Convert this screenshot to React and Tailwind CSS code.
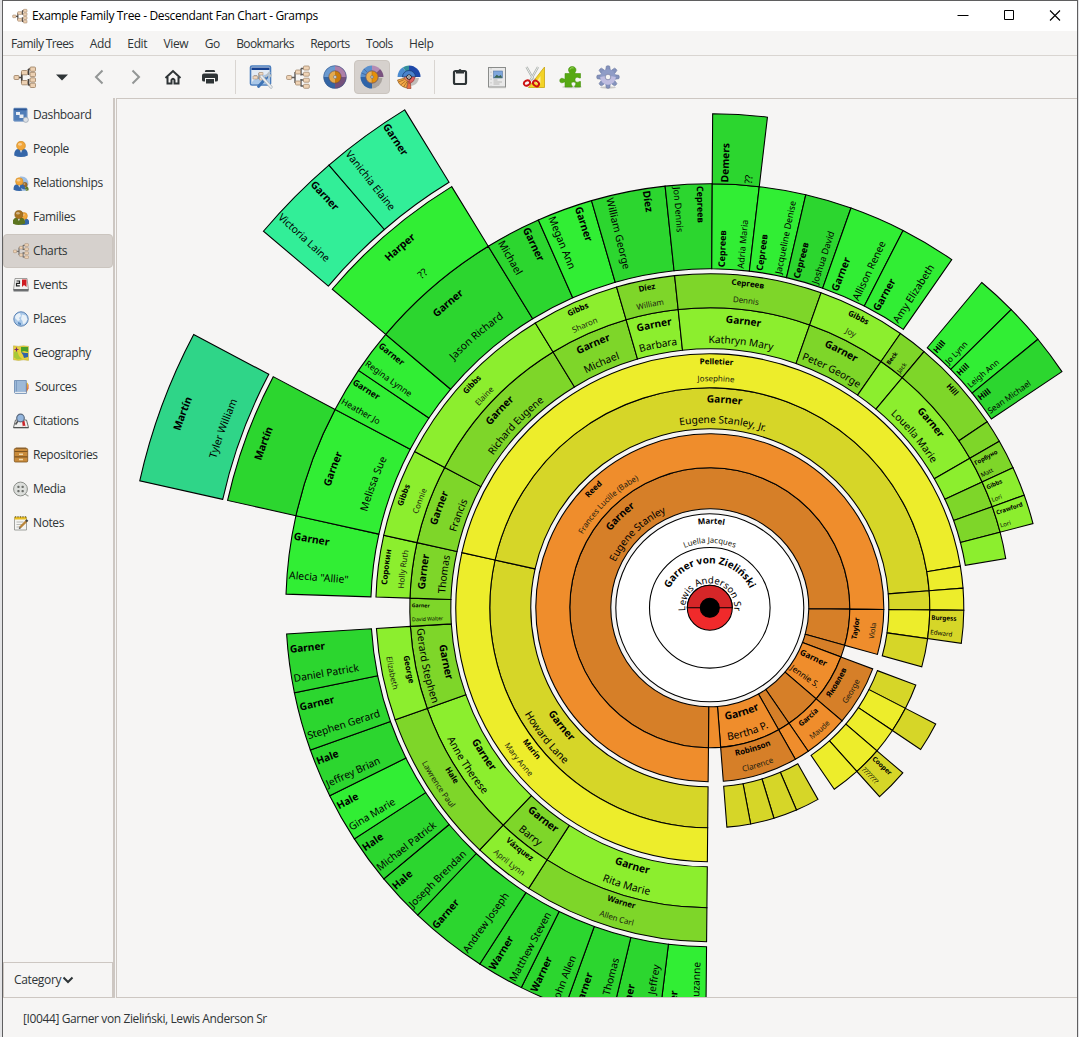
import React from "react";

const CX = 709.8;
const CY = 607.8;
const ORANGE = ["#d67f28", "#ef8d2c"];
const YELLOW = ["#d6d628", "#eded2b"];
const LIME = ["#7ed629", "#8cee2e"];
const GREEN = ["#2cd62f", "#31ee34"];
const TEAL = ["#2fd588", "#32ee98"];

// [inner radius, outer radius, start angle, end angle, fill, surname, given, mode, font size, given start radius]
// Angles are degrees clockwise from twelve o'clock. Mode "a" follows the arc, "r" follows the radius.
const SECTORS = [
  [99, 140, -179.45, 90.55, ORANGE[0], "Garner", "Eugene Stanley", "a", 10.1],
  [140, 174, -179.45, 90.55, ORANGE[1], "Reed", "Frances Lucille (Babe)", "a", 7.9],
  [99, 140, 90.55, 105.55, ORANGE[0]],
  [140, 174, 90.55, 105.55, ORANGE[1], "Taylor", "Viola", "a", 7.3],
  [99, 140, 105.55, 110.55, ORANGE[0]],
  [99, 140, 110.55, 130.55, ORANGE[1], "Garner", "Jennie S.", "r", 8.3],
  [140, 174, 110.55, 130.55, ORANGE[0], "Яковлев", "George", "a", 7.8],
  [99, 140, 130.55, 145.55, ORANGE[0]],
  [140, 174, 130.55, 145.55, ORANGE[1], "García", "Maude", "a", 7.5],
  [99, 140, 145.55, 150.55, ORANGE[0]],
  [140, 174, 145.55, 150.55, ORANGE[1]],
  [99, 140, 150.55, 175.55, ORANGE[1], "Garner", "Bertha P.", "a", 10.4],
  [140, 174, 150.55, 175.55, ORANGE[0], "Robinson", "Clarence", "a", 8],
  [99, 140, 175.55, 180.55, ORANGE[1]],

  [179, 220, -179.45, -77.45, YELLOW[0], "Garner", "Howard Lane", "a", 10.4],
  [220, 254, -179.45, -77.45, YELLOW[1], "Marín", "Mary Anne", "a", 8],
  [179, 220, -77.45, 85.55, YELLOW[0], "Garner", "Eugene Stanley, Jr.", "a", 10.2],
  [220, 254, -77.45, 80.55, YELLOW[1], "Pelletier", "Josephine", "a", 8],
  [220, 254, 80.55, 85.55, YELLOW[1]],
  [179, 220, 85.55, 90.55, YELLOW[0]],
  [220, 254, 85.55, 90.55, YELLOW[1]],
  [179, 220, 90.55, 98.05, YELLOW[1]],
  [220, 254, 90.55, 98.05, YELLOW[0], "Burgess", "Edward", "r", 6.3],
  [179, 220, 98.05, 105.55, YELLOW[0]],
  [179, 220, 110.55, 117.2, YELLOW[0]],
  [179, 220, 117.2, 123.9, YELLOW[1]],
  [220, 254, 117.2, 123.9, YELLOW[0]],
  [179, 220, 123.9, 130.55, YELLOW[1]],
  [179, 220, 130.55, 138.05, YELLOW[1]],
  [220, 254, 130.55, 138.05, YELLOW[0], "Cooper", "???????", "r", 6.7],
  [179, 220, 138.05, 145.55, YELLOW[1]],
  [179, 220, 150.55, 156.8, YELLOW[0]],
  [179, 220, 156.8, 163.05, YELLOW[0]],
  [179, 220, 163.05, 169.3, YELLOW[0]],
  [179, 220, 169.3, 175.55, YELLOW[0]],

  [259, 300, -179.45, -147.15, LIME[1], "Garner", "Rita Marie", "a", 10.4],
  [300, 334, -179.45, -147.15, LIME[0], "Warner", "Allen Carl", "a", 8],
  [259, 300, -147.15, -136.45, LIME[0], "Garner", "Barry", "a", 10.4],
  [300, 334, -147.15, -136.45, LIME[1], "Vázquez", "April Lynn", "a", 8],
  [259, 300, -136.45, -109.6, LIME[1], "Garner", "Anne Therese", "a", 10.4],
  [300, 334, -136.45, -109.6, LIME[0], "Hale", "Lawrence Paul", "a", 8],
  [259, 300, -109.6, -93.55, LIME[0], "Garner", "Gerard Stephen", "a", 10.4],
  [300, 334, -109.6, -93.55, LIME[1], "George", "Elizabeth", "a", 8],
  [259, 300, -93.55, -88.15, LIME[0], "Garner", "David Walter", "r", 5.2],
  [259, 300, -88.15, -77.45, LIME[0], "Garner", "Thomas", "a", 10.2],
  [300, 334, -88.15, -77.45, LIME[1], "Сорокин", "Holly Ruth", "a", 8],
  [259, 300, -77.45, -62.1, LIME[0], "Garner", "Francis", "a", 10.2],
  [300, 334, -77.45, -62.1, LIME[1], "Gibbs", "Connie", "a", 8],
  [259, 300, -62.1, -31.5, LIME[0], "Garner", "Richard Eugene", "a", 10.2],
  [300, 334, -62.1, -31.5, LIME[1], "Gibbs", "Elaine", "a", 8],
  [259, 300, -31.5, -16.2, LIME[0], "Garner", "Michael", "a", 10.2],
  [300, 334, -31.5, -16.2, LIME[1], "Gibbs", "Sharon", "a", 8],
  [259, 300, -16.2, -6.05, LIME[1], "Garner", "Barbara", "a", 10.2],
  [300, 334, -16.2, -6.05, LIME[0], "Díez", "William", "a", 8],
  [259, 300, -6.05, 19.45, LIME[1], "Garner", "Kathryn Mary", "a", 10.2],
  [300, 334, -6.05, 19.45, LIME[0], "Сергеев", "Dennis", "a", 8],
  [259, 300, 19.45, 34.8, LIME[0], "Garner", "Peter George", "a", 10.2],
  [300, 334, 19.45, 34.8, LIME[1], "Gibbs", "Joy", "a", 8],
  [259, 300, 34.8, 39.9, LIME[1]],
  [300, 334, 34.8, 39.9, LIME[0], "Beck", "Jack", "r", 6],
  [259, 300, 39.9, 60.1, LIME[1], "Garner", "Louella Marie", "a", 10.2],
  [300, 334, 39.9, 56.15, LIME[0], "Hill", "", "a", 8],
  [300, 334, 56.15, 60.1, LIME[0]],
  [259, 300, 60.1, 65.2, LIME[1]],
  [300, 334, 60.1, 65.2, LIME[0], "Горбуно", "Matt", "r", 6],
  [259, 300, 65.2, 70.3, LIME[0]],
  [300, 334, 65.2, 70.3, LIME[1], "Gibbs", "Lori", "r", 6],
  [259, 300, 70.3, 75.4, LIME[0]],
  [300, 334, 70.3, 75.4, LIME[1], "Crawford", "Lori", "r", 6],
  [259, 300, 75.4, 80.55, LIME[1]],

  [339, 424, -179.45, -172.99, GREEN[1], "Warner", "Suzanne", "r", 10.2, 395],
  [339, 424, -172.99, -166.53, GREEN[0], "Warner", "Jeffrey", "r", 10.2, 391],
  [339, 424, -166.53, -160.07, GREEN[0], "Warner", "Thomas", "r", 10.2, 401],
  [339, 424, -160.07, -153.61, GREEN[0], "Warner", "John Allen", "r", 10.2],
  [339, 424, -153.61, -147.15, GREEN[0], "Warner", "Matthew Steven", "r", 10.2],
  [339, 424, -147.15, -136.45, GREEN[0], "Garner", "Andrew Joseph", "r", 10.2],
  [339, 424, -136.45, -129.74, GREEN[0], "Hale", "Joseph Brendan", "r", 10.2],
  [339, 424, -129.74, -123.03, GREEN[0], "Hale", "Michael Patrick", "r", 10.2],
  [339, 424, -123.03, -116.31, GREEN[1], "Hale", "Gina Marie", "r", 10.2],
  [339, 424, -116.31, -109.6, GREEN[0], "Hale", "Jeffrey Brian", "r", 10.2],
  [339, 424, -109.6, -101.57, GREEN[0], "Garner", "Stephen Gerard", "r", 10.2],
  [339, 424, -101.57, -93.55, GREEN[0], "Garner", "Daniel Patrick", "r", 10.2],
  [339, 424, -88.15, -77.45, GREEN[1], "Garner", 'Alecia "Allie"', "r", 10.4],
  [339, 424, -77.45, -62.1, GREEN[1], "Garner", "Melissa Sue", "a", 10.4],
  [424, 494, -77.45, -62.1, GREEN[0], "Martín", "", "a", 10.4],
  [339, 424, -62.1, -55.95, GREEN[1], "Garner", "Heather Jo", "r", 8.7],
  [339, 424, -55.95, -49.85, GREEN[1], "Garner", "Regina Lynne", "r", 8.7],
  [339, 424, -49.85, -31.5, GREEN[0], "Garner", "Jason Richard", "a", 10.4],
  [424, 494, -49.85, -31.5, GREEN[1], "Harper", "??", "a", 10.4],
  [339, 424, -31.5, -23.85, GREEN[0], "Garner", "Michael", "r", 10.4],
  [339, 424, -23.85, -16.2, GREEN[1], "Garner", "Megan Ann", "r", 10.4],
  [339, 424, -16.2, -6.05, GREEN[0], "Díez", "William George", "r", 10.2],
  [339, 424, -6.05, 0.33, GREEN[0], "Сергеев", "Jon Dennis", "r", 9],
  [339, 424, 0.33, 6.7, GREEN[1], "Сергеев", "Adria Maria", "r", 9],
  [424, 494, 0.33, 6.7, GREEN[0], "Demers", "??", "r", 10.2],
  [339, 424, 6.7, 13.08, GREEN[1], "Сергеев", "Jacqueline Denise", "r", 9],
  [339, 424, 13.08, 19.45, GREEN[0], "Сергеев", "Joshua David", "r", 9],
  [339, 424, 19.45, 27.12, GREEN[1], "Garner", "Allison Renee", "r", 10.2],
  [339, 424, 27.12, 34.8, GREEN[1], "Garner", "Amy Elizabeth", "r", 10.2],
  [339, 424, 39.9, 45.3, GREEN[1], "Hill", "Jo Lynn", "r", 8.2],
  [339, 424, 45.3, 50.7, GREEN[1], "Hill", "Leigh Ann", "r", 8.2],
  [339, 424, 50.7, 56.15, GREEN[0], "Hill", "Sean Michael", "r", 8.2],

  [499, 584, -77.45, -62.1, TEAL[0], "Martín", "Tyler William", "a", 10.4],
  [499, 584, -49.85, -40.7, TEAL[1], "Garner", "Victoria Laine", "r", 10.4],
  [499, 584, -40.7, -31.5, TEAL[1], "Garner", "Vanichia Elaine", "r", 10.4],
];

function pt(r, deg) {
  const a = (deg * Math.PI) / 180;
  return `${(CX + r * Math.sin(a)).toFixed(2)} ${(CY - r * Math.cos(a)).toFixed(2)}`;
}

function sectorPath(r0, r1, a0, a1) {
  const big = a1 - a0 > 180 ? 1 : 0;
  return `M${pt(r0, a0)}L${pt(r1, a0)}A${r1} ${r1} 0 ${big} 1 ${pt(r1, a1)}L${pt(r0, a1)}A${r0} ${r0} 0 ${big} 0 ${pt(r0, a0)}Z`;
}

function ArcText({ id, r, mid, flip, size, bold, span = 85, children }) {
  const big = span > 90 ? 1 : 0;
  const d = flip
    ? `M${pt(r, mid + span)}A${r} ${r} 0 ${big} 0 ${pt(r, mid - span)}`
    : `M${pt(r, mid - span)}A${r} ${r} 0 ${big} 1 ${pt(r, mid + span)}`;
  return (
    <>
      <path id={id} d={d} fill="none" />
      <text fontSize={size} fontWeight={bold ? 700 : 400} fill={!bold && size < 9 ? "#1c1c10" : "#000"} textAnchor="middle">
        <textPath href={`#${id}`} startOffset="50%">
          {children}
        </textPath>
      </text>
    </>
  );
}

function RadialText({ start, angle, inward, size, bold, children }) {
  const [x, y] = pt(start, angle).split(" ");
  return (
    <text
      transform={`translate(${x} ${y}) rotate(${inward ? angle + 90 : angle - 90})`}
      y={size * 0.4}
      fontSize={size}
      fontWeight={bold ? 700 : 400}
    >
      {children}
    </text>
  );
}

function SectorLabel({ index, s }) {
  const [r0, r1, a0, a1, , surname, given, mode, size, givenStart] = s;
  if (!surname) return null;
  const mid = (a0 + a1) / 2;
  if (mode === "r") {
    const inward = mid < 0;
    const q = (a1 - a0) / 4;
    const first = inward ? mid + q : mid - q;
    const second = inward ? mid - q : mid + q;
    const start = inward ? r1 - 2 : r0 + 1.8;
    return (
      <>
        <RadialText start={start} angle={first} inward={inward} size={size} bold>{surname}</RadialText>
        <RadialText start={givenStart || start} angle={second} inward={inward} size={size}>{given}</RadialText>
      </>
    );
  }
  const flip = Math.abs(mid) > 90;
  const q = (r1 - r0) / 4;
  const shift = flip ? size * (size > 9 ? 0.36 : 0.2) : size > 9 ? -4.4 : -1.9;
  const hi = r1 - q + shift;
  const lo = r0 + q + shift;
  return (
    <>
      <ArcText id={`s${index}`} r={flip ? lo : hi} mid={mid} flip={flip} size={size} bold>{surname}</ArcText>
      {given && <ArcText id={`g${index}`} r={flip ? hi : lo} mid={mid} flip={flip} size={size}>{given}</ArcText>}
    </>
  );
}

function FanChart() {
  return (
    <svg width="961" height="898" viewBox="117 99 961 898" className="block" fontFamily="'Noto Sans', 'Open Sans', sans-serif">
      <g stroke="#000" strokeWidth="1.08">
        {SECTORS.map((s, i) => (
          <path key={i} d={sectorPath(s[0], s[1], s[2], s[3])} fill={s[4]} />
        ))}
        <circle cx={CX} cy={CY} r="94" fill="#fff" />
        <circle cx={CX} cy={CY} r="60.3" fill="#fff" />
        <circle cx={CX} cy={CY} r="22.5" fill="#f02a2b" />
        <path d="M687.3 607.8a22.5 22.5 0 0 1 45 0z" fill="#d62628" />
        <circle cx={CX} cy={CY} r="9.5" fill="#000" />
      </g>
      <ArcText id="c1" r={84} mid={1} size={8} bold>Martel</ArcText>
      <ArcText id="c2" r={65} mid={0} size={7.8}>Luella Jacques</ArcText>
      <ArcText id="c3" r={44.5} mid={0} size={10} bold>Garner von Zieliński</ArcText>
      <ArcText id="c4" r={24.5} mid={0} size={9.6} span={150}>Lewis Anderson Sr</ArcText>
      {SECTORS.map((s, i) => (
        <SectorLabel key={i} index={i} s={s} />
      ))}
    </svg>
  );
}

function Svg({ size = 24, box = 24, children }) {
  return (
    <svg width={size} height={size} viewBox={`0 0 ${box} ${box}`} fill="none" className="block shrink-0">
      {children}
    </svg>
  );
}

function Pedigree({ size = 24 }) {
  return (
    <Svg size={size}>
      <path d="M5 12.500h4M9 7v11M9 7h3M9 18h3M15 3.500v7M15 14v7.500M15 3.500h3M15 9.500h3M15 15h3M15 21h3" stroke="#5b5856" strokeWidth="1.4" />
      <g fill="#efd3b5" stroke="#a58a70" strokeWidth=".8">
        <rect x=".6" y="10.500" width="5" height="4" rx="1" />
        <rect x="9.500" y="5" width="5" height="4" rx="1" />
        <rect x="9.500" y="16" width="5" height="4" rx="1" />
        <rect x="17.500" y="1" width="5.800" height="4" rx="1" />
        <rect x="17.500" y="7.200" width="5.800" height="4" rx="1" />
        <rect x="17.500" y="13.200" width="5.800" height="4" rx="1" />
        <rect x="17.500" y="19.300" width="5.800" height="4" rx="1" />
      </g>
    </Svg>
  );
}

function TreeTool({ size = 24 }) {
  return (
    <Svg size={size}>
      <path d="M5 12.500h4M8.800 7.500v10.500M8.800 7.500h3M8.800 17.800h3M15.500 4v6M15.500 14v6.500M15.500 4h2M15.500 20h2" stroke="#45413e" strokeWidth="1.700" />
      <g fill="#ecd0b2" stroke="#9b7d60" strokeWidth=".8">
        <rect x="1" y="10.500" width="5" height="4" rx="1" />
        <rect x="8.500" y="5.500" width="6" height="4.300" rx="1" />
        <rect x="8.500" y="15.500" width="6" height="4.300" rx="1" />
        <rect x="17" y="2" width="5.500" height="4.300" rx="1" />
        <rect x="17" y="7.300" width="5.500" height="4.300" rx="1" />
        <rect x="17" y="12.800" width="5.500" height="4.300" rx="1" />
        <rect x="17" y="18.200" width="5.500" height="4.300" rx="1" />
      </g>
    </Svg>
  );
}

function DashboardTool() {
  return (
    <Svg>
      <rect x="1.500" y="1" width="20" height="19" rx="1.500" fill="#e3ebf4" stroke="#4a7dbd" strokeWidth="1.600" />
      <path d="M2.500 2.500h18v2.500h-18z" fill="#153f8f" />
      <path d="M3 17c4-5 9-7 18-8v10H3z" fill="#a9c7e8" />
      <path d="M5 11h3M10 8v6M10 8h3" stroke="#6b6661" />
      <path d="M4 11h4.500v3H4zM10.500 12h4v3h-4zM10 7.500h4v2.500h-4z" fill="#f0d8c0" stroke="#af957c" strokeWidth=".6" />
      <path d="M9.500 21.500L18 12" stroke="#3e73b5" strokeWidth="2.800" strokeLinecap="round" />
      <path d="M12.500 11.500L22 22" stroke="#aeb6bd" strokeWidth="3.200" strokeLinecap="round" />
      <path d="M12.500 11.500L22 22" stroke="#eceff1" strokeWidth="1.800" strokeLinecap="round" />
      <path d="M17 11.500l3.500-4M20 12.500l2-2.500" stroke="#b8c0c6" strokeWidth="2" strokeLinecap="round" />
    </Svg>
  );
}

function FanFull() {
  return (
    <Svg>
      <path d="M12 12V.5A11.500 11.500 0 0 0 .5 12z" fill="#6b9ad0" />
      <path d="M12 12H.5A11.500 11.500 0 0 0 12 23.500z" fill="#3465a4" />
      <path d="M12 12V.5A11.500 11.500 0 0 1 23.500 12z" fill="#ad7fa8" />
      <path d="M12 12h11.500A11.500 11.500 0 0 1 12 23.500z" fill="#75507b" />
      <circle cx="12" cy="12" r="11.300" stroke="#3a5a8c" strokeWidth=".6" />
      <path d="M12 5.800a6.200 6.200 0 0 0 0 12.400z" fill="#e3aa50" />
      <path d="M12 5.800a6.200 6.200 0 0 1 0 12.400z" fill="#ca7b0c" />
      <circle cx="12" cy="12" r="6.200" stroke="#5c4a52" strokeWidth=".6" />
      <circle cx="12" cy="12" r="1.500" fill="#dedede" stroke="#777" strokeWidth=".7" />
    </Svg>
  );
}

function FanDescendant() {
  return (
    <Svg>
      <path d="M12 23.500A11.500 11.500 0 0 0 22.500 13L12 12z" fill="#7d7670" opacity=".5" />
      <path d="M12 12V.5A11.500 11.500 0 0 0 .5 12z" fill="#5b90cd" />
      <path d="M12 12H.5A11.500 11.500 0 0 0 12 23.500z" fill="#2f64a8" />
      <path d="M12 12V.5A11.500 11.500 0 0 1 20 3.900z" fill="#b58bb4" />
      <path d="M12 12l8-8.100A11.500 11.500 0 0 1 23.500 12z" fill="#7a527f" />
      <path d="M3.900 4l8 8M1.500 8l10 4" stroke="#34578a" strokeWidth=".6" />
      <path d="M12 5.800a6.200 6.200 0 0 0 0 12.400z" fill="#e9b055" />
      <path d="M12 5.800a6.200 6.200 0 0 1 0 12.400z" fill="#e58f0a" />
      <circle cx="12" cy="12" r="6.200" stroke="#6a5568" strokeWidth=".8" />
      <path d="M12 6v12" stroke="#9a6a20" strokeWidth=".5" />
      <circle cx="12" cy="12" r="1.300" fill="#dce6ee" stroke="#6a7078" strokeWidth=".8" />
    </Svg>
  );
}

function FanTwoWay() {
  return (
    <Svg>
      <path d="M12 21c6 0 9-3 10-8H12z" fill="#8b8580" opacity=".5" />
      <path d="M.5 12A11.500 11.500 0 0 1 6 2.200L12 12z" fill="#4b8bd0" />
      <path d="M6 2.200A11.500 11.500 0 0 1 12 .5V12z" fill="#35909c" />
      <path d="M12 .5A11.500 11.500 0 0 1 23.500 12H12z" fill="#1e48a8" />
      <path d="M5.500 12a6.500 6.500 0 0 1 13 0z" fill="#4a83cc" stroke="#1b3c74" strokeWidth=".8" />
      <path d="M8 13l-7.500 2L2 18.500l3.500 3 4 1.500 1.500-7z" fill="#f5a947" stroke="#8e5a1d" strokeWidth=".7" />
      <path d="M10 23.500l1.500-8h1.500l1 8q-2 .4-4 0z" fill="#ea6b42" stroke="#923b2a" strokeWidth=".6" />
      <path d="M1.500 17l6-2.500M3.500 20l5-4M6.500 22l4-6" stroke="#9c611d" strokeWidth=".8" />
      <path d="M12 12h6q-.5 5-5 6.300l-1-.3z" fill="#dd5f5f" stroke="#8e3a3a" strokeWidth=".6" />
      <path d="M12 12H7.500q0 3.500 4.500 4.500z" fill="#e8876c" stroke="#8e3a3a" strokeWidth=".5" />
      <circle cx="12" cy="12" r="2.600" fill="#111" />
      <circle cx="12" cy="12" r="1.800" fill="#fff" />
      <circle cx="12" cy="12" r=".8" fill="#222" />
    </Svg>
  );
}

function ReportTool() {
  return (
    <Svg>
      <rect x="3.500" y="2.500" width="17" height="19.500" fill="#e9e9e9" stroke="#8a8c8a" />
      <path d="M4 22.700h17" stroke="#bdbdbb" />
      <path d="M6 3v18.500" stroke="#c4c4c2" strokeDasharray="1.500 2" />
      <rect x="8.500" y="6" width="9" height="7" fill="#7ea6dc" stroke="#5677a5" strokeWidth=".6" />
      <path d="M8.800 12.700l3-3 2 1.600 2-1.300 1.500 2.700z" fill="#3a6552" />
      <path d="M8.500 15h4M8.500 17h8.500M8.500 19h6" stroke="#b8b8b6" />
    </Svg>
  );
}

function ToolsTool() {
  return (
    <Svg>
      <path d="M22.500 2v20.500H6.500z" fill="#f3d327" stroke="#c8a510" strokeWidth=".8" />
      <path d="M18.500 11v7.500H13z" fill="#f9ec93" />
      <path d="M4.500 2L13 17M16 2L7.500 17" stroke="#a9aeab" strokeWidth="2.300" />
      <path d="M4.500 2L13 17M16 2L7.500 17" stroke="#e7eae8" strokeWidth="1" />
      <ellipse cx="5" cy="18" rx="3.200" ry="2.500" stroke="#cc1111" strokeWidth="1.900" transform="rotate(-30 5 18)" />
      <ellipse cx="14" cy="18.500" rx="3.200" ry="2.500" stroke="#cc1111" strokeWidth="1.900" transform="rotate(35 14 18.500)" />
    </Svg>
  );
}

function PuzzleTool() {
  return (
    <Svg>
      <ellipse cx="13" cy="22" rx="10" ry="1.300" fill="#cfcfcc" />
      <path d="M6 8.500h4.500c.5-1-1-2-1-3.500C9.500 3 11 1.500 13.200 1.500S17 3 17 5c0 1.500-1.500 2.500-1 3.500h5.500V13c-1 .4-2-.8-3.200-.8-1.500 0-2.300 1-2.300 2.500s.8 2.500 2.300 2.500c1.200 0 2.200-1 3.200-.7V22h-5.700c-.5-1.200 1-1.800 1-3.200 0-1.200-1-1.800-2.300-1.800s-2.300.6-2.300 1.800c0 1.400 1.500 2 1 3.200H6v-5c-.8-.5-1.700.8-3.200.8-1.300 0-2-.9-2-2.200s.8-2.300 2.100-2.300c1.400 0 2.300 1.200 3.100.8z" fill="#56a913" stroke="#4a9410" strokeWidth=".6" />
      <path d="M11 4.500c.3-1.500 2-2 3.500-1.500" stroke="#a6dc6a" strokeWidth="1" />
    </Svg>
  );
}

function GearTool() {
  const teeth = [0, 45, 90, 135, 180, 225, 270, 315];
  return (
    <Svg>
      <ellipse cx="12" cy="22.500" rx="8" ry="1.200" fill="#cbcac8" />
      <g fill="#8593bd" stroke="#66739e" strokeWidth=".6">
        {teeth.map((t) => (
          <path key={t} d="M9.700 5.500L10.300 1.200q1.700-1 3.400 0L14.300 5.500z" transform={`rotate(${t} 12 12)`} />
        ))}
      </g>
      <circle cx="12" cy="12" r="7.800" fill="#8f9cc6" />
      <path d="M4.200 12a7.800 7.800 0 0 0 15.600 0q-8-2-15.600 0z" fill="#bfbde0" />
      <circle cx="12" cy="12" r="2.800" fill="#f6f5f4" stroke="#7b82a8" strokeWidth=".8" />
    </Svg>
  );
}

const Caret = () => (
  <Svg><path d="M6 9.500h12l-6 6z" fill="#2e3436" /></Svg>
);
const Back = () => (
  <Svg><path d="M15.500 5.500L9 12l6.500 6.500" stroke="#939695" strokeWidth="2" /></Svg>
);
const Forward = () => (
  <Svg><path d="M8.500 5.500L15 12l-6.500 6.500" stroke="#939695" strokeWidth="2" /></Svg>
);
const Home = () => (
  <Svg>
    <path d="M4.500 13L12 6l7.500 7" stroke="#2e3436" strokeWidth="2" />
    <path d="M6.500 12v6.500h4V15q1.500-2.500 3 0v3.500h4V12" stroke="#2e3436" strokeWidth="2" />
  </Svg>
);
const Print = () => (
  <Svg>
    <path d="M8 5h8q1 0 1.200 2H6.800Q7 5 8 5z" fill="#2e3436" />
    <path d="M6 8.500h12q2 0 2 2v4.500q0 1.500-2 1.500h-1V13H7v3.500H6q-2 0-2-1.500v-4.500q0-2 2-2z" fill="#2e3436" />
    <path d="M8 14h8v4.500H8z" fill="#2e3436" />
  </Svg>
);
const Clipboard = () => (
  <Svg>
    <rect x="6" y="6" width="12" height="13" rx="1.500" stroke="#2e3436" strokeWidth="2.200" />
    <path d="M8 5h2.500q1.500-1.800 3 0H16v3.500H8z" fill="#2e3436" />
  </Svg>
);

function Person({ x = 0, coat = "#3566a8", head = "#f2a73b", hair = "#c98318", s = 1 }) {
  return (
    <g transform={`translate(${x} ${16 - 16 * s}) scale(${s})`}>
      <path d="M1.200 14.500Q1 8.500 5 8h6q4 .5 3.800 6.500-3 1.500-6.800 1.500t-6.800-1.500z" fill={coat} />
      <path d="M6.500 8L8 12l1.500-4z" fill="#e8edf3" />
      <circle cx="8" cy="4.700" r="4.400" fill={head} stroke={hair} strokeWidth=".6" />
      <ellipse cx="7" cy="3.300" rx="2" ry="1.400" fill="#fff" opacity=".45" />
    </g>
  );
}

const sideIcons = {
  Dashboard: (
    <Svg size={16} box={16}>
      <rect x=".6" y="1.200" width="13.500" height="13" rx="1" fill="#4f7db8" stroke="#8aa7cc" />
      <path d="M1 1.500h12.700v1.800H1z" fill="#2c5694" />
      <path d="M3 5h4v3H3zM6.500 7.500h4v3.500h-4z" fill="#e8edf3" />
      <circle cx="12.800" cy="12.800" r="2.600" fill="#dde1e6" stroke="#9aa5b2" strokeWidth=".7" />
    </Svg>
  ),
  People: <Svg size={16} box={16}><Person /></Svg>,
  Relationships: (
    <Svg size={16} box={16}>
      <path d="M7 1.500q8-1 8.500 7.500l-2 5-5-4z" fill="#9dbde2" />
      <Person x={7.5} s={0.55} coat="#5d7a26" head="#9c6a24" hair="#6e4a14" />
      <Person s={0.85} x={-0.5} />
      <path d="M8 13q4 2.500 6.500 1l-2 2H9z" fill="#a8c4e4" />
    </Svg>
  ),
  Families: (
    <Svg size={16} box={16}>
      <Person x={4.5} s={0.8} />
      <Person x={-1.5} s={0.92} coat="#5c7420" head="#a8731f" hair="#7c5414" />
    </Svg>
  ),
  Charts: <Pedigree size={16} />,
  Events: (
    <Svg size={16} box={16}>
      <path d="M2 1.500h12l1.500 11.500H.5z" fill="#f2f2f1" stroke="#8a8a88" strokeWidth=".8" />
      <path d="M.5 12h15v2.500H.5z" fill="#6c6e70" />
      <path d="M3.500 4h3v2.300h-3v2.500h3.300" stroke="#222" strokeWidth="1.200" />
      <path d="M9 2.500h4.500V10L11 8l-2 2z" fill="#cf1c22" />
    </Svg>
  ),
  Places: (
    <Svg size={16} box={16}>
      <circle cx="8" cy="8" r="7.200" fill="#a9c8e8" stroke="#5c83b4" />
      <path d="M2 7q0-4 5-5l1 3-2 2 1 2-2 1zM9 3.500l4 1 1.500 4-2.500 4-2 .5-.5-3L8 8z" fill="#e9f1f8" />
      <path d="M5 11l3 1v2.300l-3-1z" fill="#5d8cc0" />
    </Svg>
  ),
  Geography: (
    <Svg size={16} box={16}>
      <path d="M.5.8l5 .6 5-.6 5 .6v14l-5-.6-5 .6-5-.6z" fill="#e8d23b" stroke="#b7a63c" strokeWidth=".5" />
      <path d="M8 2l7 0v5l-4-1-3 1z" fill="#4aa02c" />
      <path d="M8 7l4 1 3 0v4l-4 1-1-3z" fill="#3264a6" />
      <path d="M1 7l3-1 2 5 3 3-5 .5-3-2z" fill="#a8c936" />
      <path d="M1.500 4.500h4M3.500 2.500v4" stroke="#7c2c6c" strokeWidth="1.200" />
    </Svg>
  ),
  Sources: (
    <Svg size={16} box={16}>
      <path d="M13 4l2.500 1.500v4L13 14z" fill="#d84a32" />
      <path d="M13.500 3.500l1.500.5-1 10z" fill="#edca3a" />
      <path d="M1.500 1.500h11.800v13H3q-1.500 0-1.500-1.500z" fill="#9db9d8" stroke="#6787ad" strokeWidth=".8" />
      <path d="M3.500 2v10.500" stroke="#7d9cc2" />
      <path d="M2 13.500h11" stroke="#e8ecf0" strokeWidth="1.200" />
    </Svg>
  ),
  Citations: (
    <Svg size={16} box={16}>
      <path d="M2.500 7h11l2 7.500H.5z" fill="#f0f0ee" stroke="#6b6d6b" />
      <path d="M.5 14h15v1.300H.5z" fill="#515351" />
      <path d="M9 8l2.500 0 1 5.500-1.500-1-1.200 1z" fill="#c9242a" />
      <path d="M5 8L2.500 11.500" stroke="#555" strokeWidth="1.600" />
      <circle cx="7.500" cy="5" r="3.800" fill="#94b6de" stroke="#5b6b80" strokeWidth="1.200" />
    </Svg>
  ),
  Repositories: (
    <Svg size={16} box={16}>
      <path d="M2 1.500L3 .5h10l1 1z" fill="#8a5f2a" />
      <rect x="1.300" y="1.500" width="13.400" height="13.500" rx="1" fill="#c98b3b" stroke="#7e5420" strokeWidth=".8" />
      <path d="M1.500 4.500h13M1.500 9.800h13" stroke="#7e5420" strokeWidth="1.200" />
      <path d="M6 7.200h4M6 12.400h4" stroke="#f0d9ac" strokeWidth="1.500" />
    </Svg>
  ),
  Media: (
    <Svg size={16} box={16}>
      <path d="M12 13l3.500 2.200" stroke="#a5a8a3" strokeWidth="1.200" />
      <circle cx="7.500" cy="8" r="6.900" fill="#dcdedb" stroke="#8c8f8a" />
      <g fill="#6c6f6b">
        <rect x="4.300" y="4.800" width="2.300" height="2.300" rx=".8" />
        <rect x="8.500" y="4.800" width="2.300" height="2.300" rx=".8" />
        <rect x="4.300" y="9" width="2.300" height="2.300" rx=".8" />
        <rect x="8.500" y="9" width="2.300" height="2.300" rx=".8" />
      </g>
    </Svg>
  ),
  Notes: (
    <Svg size={16} box={16}>
      <path d="M1.500 2h12v13h-12z" fill="#f4f4f2" stroke="#8b8d88" strokeWidth=".8" />
      <path d="M1.500 2h12v2.500h-12z" fill="#e8bf25" />
      <path d="M2.500 1v2M5 1v2M7.500 1v2M10 1v2M12.500 1v2" stroke="#8d7420" strokeWidth=".8" />
      <path d="M3.500 7h7M3.500 9.500h6M3.500 12h4" stroke="#a9aba6" strokeWidth=".8" />
      <path d="M7 12.500L13.500 6" stroke="#b9853a" strokeWidth="2.400" />
      <path d="M5.700 14l1-2 1.300 1.200z" fill="#333" />
      <path d="M13 6.500l1.500-1.500" stroke="#444" strokeWidth="2.400" />
    </Svg>
  ),
};

const MENU = ["Family Trees", "Add", "Edit", "View", "Go", "Bookmarks", "Reports", "Tools", "Help"];
const TIGHT_MENU = ["Family Trees", "Bookmarks", "Reports", "Tools"];
const NAV = Object.keys(sideIcons);

function ToolButton({ active, children }) {
  return (
    <div className="flex h-[34px] w-[37px] items-center justify-center">
      <div className={active ? "flex h-[34px] w-9 items-center justify-center rounded-[4px] border border-[#cbc5bf] bg-[#d6d1cd]" : "flex"}>
        {children}
      </div>
    </div>
  );
}

const Separator = () => (
  <div className="flex h-[34px] w-[14px] justify-center"><div className="w-px bg-[#d9d5d1]" /></div>
);

export default function App() {
  return (
    <div className="flex h-[1037px] w-[1079px] overflow-hidden bg-[#e3e3e5] pl-[2px] font-['Open_Sans','Noto_Sans',sans-serif] text-[12px] text-[#2e3436]">
      <div className="flex w-[1076px] shrink-0 flex-col border-x border-t border-[#5f5f60] bg-[#f6f5f4]">
        <header className="flex h-[30px] shrink-0 items-center bg-white text-black">
          <div className="ml-[9px] w-[20px]"><TreeTool size={16} /></div>
          <div className="whitespace-nowrap tracking-[-0.35px]">Example Family Tree - Descendant Fan Chart - Gramps</div>
          <div className="ml-auto mr-[16px] flex items-center gap-[34px]">
            <svg width="12" height="12" viewBox="0 0 12 12"><path d="M.5 5.500h11" stroke="#000" /></svg>
            <svg width="12" height="12" viewBox="0 0 12 12"><path d="M1.500.5h9v9h-9z" fill="none" stroke="#000" /></svg>
            <svg width="12" height="12" viewBox="0 0 12 12"><path d="M1 .5l10 10M11 .5L1 10.500" stroke="#000" strokeWidth="1.100" /></svg>
          </div>
        </header>
        <nav className="flex h-[25px] shrink-0 items-center gap-[16.4px] border-b border-[#d9d5d1] pl-2 pt-[2px] tracking-[-0.38px]">
          {MENU.map((m) => (
            <span key={m} className={TIGHT_MENU.includes(m) ? "whitespace-nowrap tracking-[-0.62px]" : "whitespace-nowrap"}>{m}</span>
          ))}
        </nav>
        <div className="flex h-[42px] shrink-0 items-center pl-[3.5px]">
          <ToolButton><TreeTool /></ToolButton>
          <ToolButton><Caret /></ToolButton>
          <ToolButton><Back /></ToolButton>
          <ToolButton><Forward /></ToolButton>
          <ToolButton><Home /></ToolButton>
          <ToolButton><Print /></ToolButton>
          <Separator />
          <ToolButton><DashboardTool /></ToolButton>
          <ToolButton><Pedigree /></ToolButton>
          <ToolButton><FanFull /></ToolButton>
          <ToolButton active><FanDescendant /></ToolButton>
          <ToolButton><FanTwoWay /></ToolButton>
          <Separator />
          <ToolButton><Clipboard /></ToolButton>
          <ToolButton><ReportTool /></ToolButton>
          <ToolButton><ToolsTool /></ToolButton>
          <ToolButton><PuzzleTool /></ToolButton>
          <ToolButton><GearTool /></ToolButton>
        </div>
        <div className="flex h-[900px] shrink-0">
          <aside className="flex w-[110px] shrink-0 flex-col">
            {NAV.map((n) => (
              <div
                key={n}
                className={
                  n === "Charts"
                    ? "flex h-[34px] items-center gap-1 rounded-[4px] border border-[#cbc5bf] bg-[#d6d1cd] pl-[9px]"
                    : "flex h-[34px] items-center gap-1 pl-[10px]"
                }
              >
                {sideIcons[n]}
                <span className={n === "Sources" ? "pl-[2px] tracking-[-0.4px]" : "tracking-[-0.4px]"}>{n}</span>
              </div>
            ))}
            <div className="mt-auto flex h-[36px] items-center border border-[#cdc7c2] pl-[10px] tracking-[-0.35px]">
              Category
              <svg width="12" height="12" viewBox="0 0 12 12" className="ml-px"><path d="M1.500 3.500L6 8l4.500-4.500" fill="none" stroke="#2e3436" strokeWidth="2" /></svg>
            </div>
          </aside>
          <div className="w-[2px] shrink-0 bg-[#cdc7c2]" />
          <main className="ml-px h-[900px] w-[961px] shrink-0 border-y border-l border-[#cdc7c2]">
            <FanChart />
          </main>
        </div>
        <footer className="flex flex-1 items-center pl-5 pt-[3px] tracking-[-0.39px]">[I0044] Garner von Zieliński, Lewis Anderson Sr</footer>
      </div>
    </div>
  );
}
